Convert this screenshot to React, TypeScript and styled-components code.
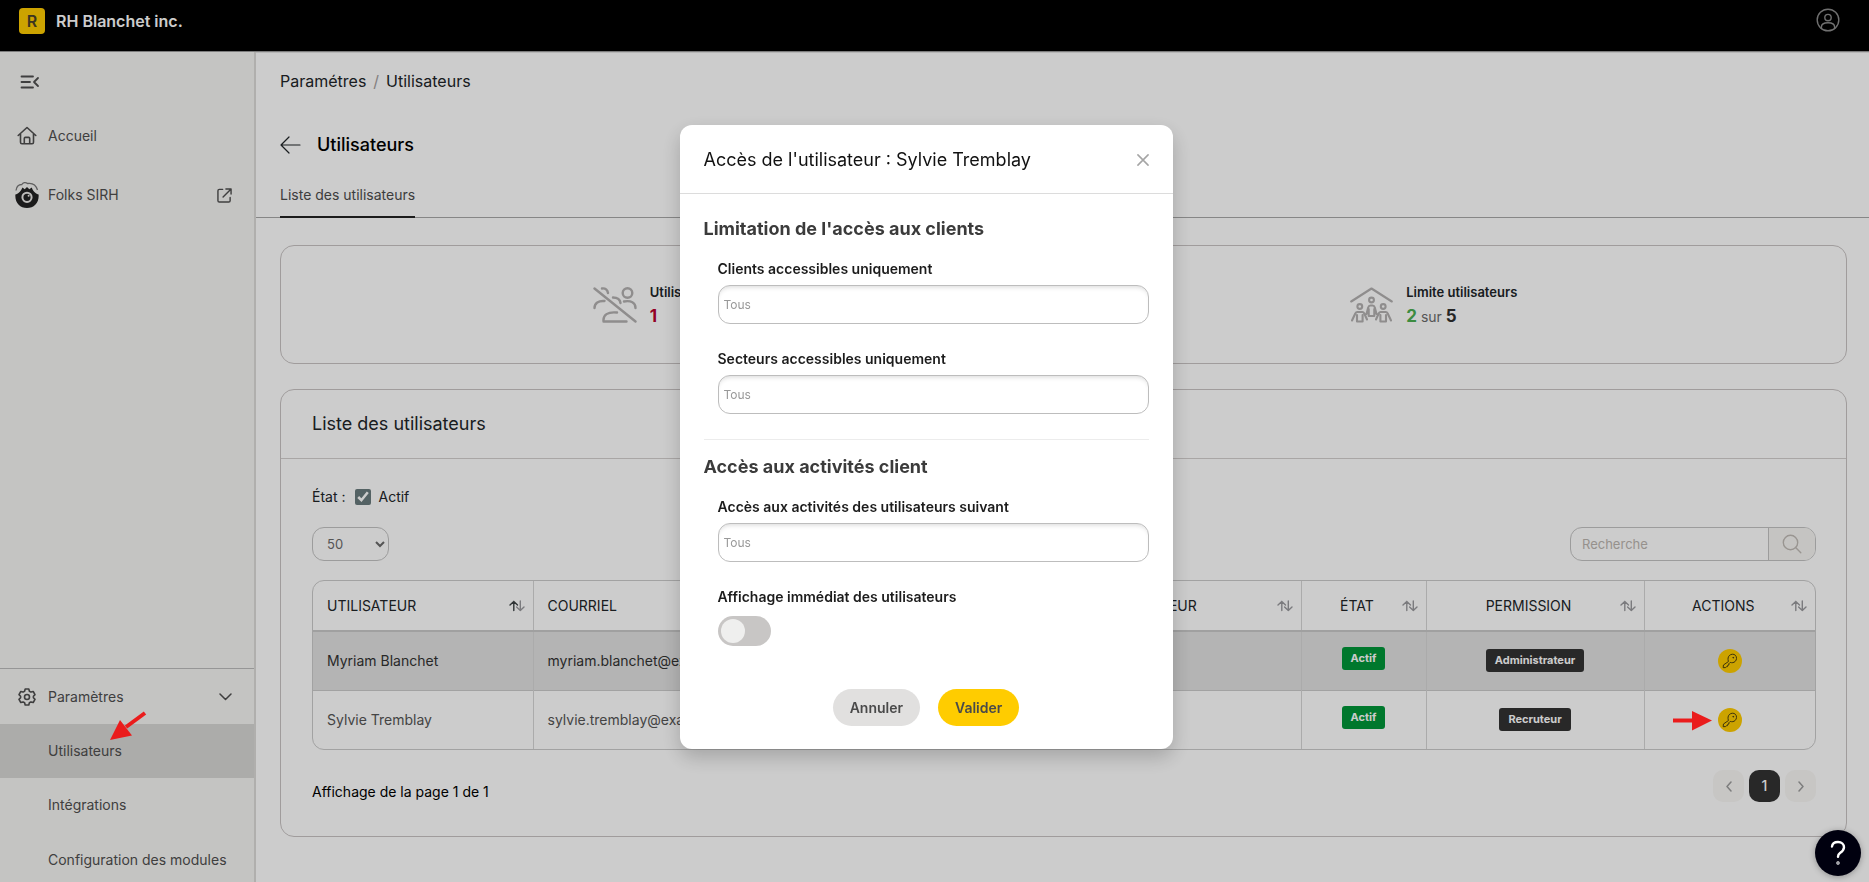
import React from 'react';
import styled, { createGlobalStyle } from 'styled-components';

const GlobalStyle = createGlobalStyle`
  *, *::before, *::after { box-sizing: border-box; }
  body { margin: 0; background: #fff; font-family: Inter, "Liberation Sans", sans-serif; font-size: 14px; line-height: 20px; color: #212529; }
  button, input, select { font: inherit; color: inherit; }
  a { color: inherit; text-decoration: none; }
  h1, h2, h3, p { margin: 0; font-weight: 400; }
`;

const Page = styled.div`
  display: flex;
  flex-direction: column;
  height: 100vh;
  overflow: hidden;
`;

const TopBar = styled.header`
  display: flex;
  flex: none;
  align-items: flex-start;
  justify-content: space-between;
  height: 52px;
  padding: 8px 29px 0 19px;
  background: #000;
  border-bottom: 1px solid #9c9c9c;
`;

const Brand = styled.a`
  display: flex;
  align-items: center;
  gap: 11px;
  color: #fff;
  font-size: 16px;
  font-weight: 600;
  line-height: 26px;
`;

const BrandMark = styled.span`
  width: 26px;
  height: 26px;
  border-radius: 4px;
  background: #ffcc00;
  color: #4a4228;
  text-align: center;
`;

const ProfileButton = styled.button`
  display: flex;
  padding: 0;
  border: 0;
  background: none;
  color: #8c8c8c;
`;

const Body = styled.div`
  display: flex;
  flex: 1;
  min-height: 0;
`;

const Sidebar = styled.nav`
  display: flex;
  flex: none;
  flex-direction: column;
  width: 256px;
  overflow: hidden;
  background: #f6f5f3;
  border-right: 2px solid #dcdbd9;
  color: #4f4f4f;
`;

const CollapseButton = styled.button`
  display: flex;
  align-self: flex-start;
  margin: 23px 20px 19px;
  padding: 0;
  border: 0;
  background: none;
`;

const NavItem = styled.a<{ $tall?: boolean }>`
  display: flex;
  align-items: center;
  height: ${p => (p.$tall ? 64 : 55)}px;
  padding: 0 22px 0 14px;
`;

const NavIcon = styled.span`
  display: flex;
  align-items: center;
  justify-content: center;
  width: 26px;
  margin-right: 8px;
`;

const NavLabel = styled.span`
  flex: 1;
`;

const SettingsGroup = styled.div`
  margin: auto 0 -6px;
  border-top: 1px solid #bcbcbc;
`;

const SubItem = styled.a<{ $active?: boolean }>`
  display: block;
  height: 54px;
  padding-left: 48px;
  line-height: 54px;
  background: ${p => (p.$active ? '#d8d7d5' : 'transparent')};
  &:last-child { height: 56px; line-height: 56px; }
`;

const Main = styled.main`
  flex: 1;
  min-width: 0;
  overflow: hidden;
  border-top: 1px solid #e4e4e4;
`;

const Breadcrumb = styled.div`
  display: flex;
  gap: 7px;
  padding: 17px 24px 0;
  font-size: 16px;
  line-height: 22px;
`;

const Slash = styled.span`
  color: #a59f9f;
`;

const TitleRow = styled.div`
  display: flex;
  align-items: center;
  gap: 16px;
  padding: 41px 24px 0;
`;

const PageTitle = styled.h1`
  color: #000;
  font-size: 18px;
  font-weight: 500;
  line-height: 24px;
`;

const BackLink = styled.a`
  display: flex;
`;

const Tabs = styled.div`
  display: flex;
  padding: 23px 24px 0;
  border-bottom: 1px solid #a8a8a8;
`;

const Tab = styled.a`
  margin-bottom: -1px;
  padding: 5px 0 11px;
  border-bottom: 2px solid #222;
  color: #4d4d4d;
`;

const Content = styled.div`
  display: flex;
  flex-direction: column;
  gap: 25px;
  padding: 27px 22px 0 24px;
`;

const Card = styled.section`
  border: 1px solid #c9c4c4;
  border-radius: 14px;
`;

const Stats = styled(Card)`
  display: grid;
  grid-template-columns: 1fr 1fr;
  height: 119px;
  padding-right: 28px;
`;

const Stat = styled.div`
  display: flex;
  align-items: center;
  justify-content: center;
  gap: 13px;
`;

const StatText = styled.div`
  min-width: 88px;
  padding-top: 4px;
`;

const StatLabel = styled.p`
  font-size: 13px;
  font-weight: 600;
  line-height: 20px;
`;

const StatValue = styled.p`
  color: #6b6b6b;
  font-size: 14px;
  line-height: 28px;
`;

const Figure = styled.strong<{ $color: string }>`
  color: ${p => p.$color};
  font-size: 17px;
  font-weight: 700;
`;

const CardTitle = styled.h2`
  padding: 0 31px;
  border-bottom: 1px solid #d4d0cf;
  font-size: 18px;
  line-height: 68px;
`;

const CardBody = styled.div`
  padding: 28px 30px 34px 31px;
`;

const FilterRow = styled.div`
  display: flex;
  align-items: center;
  gap: 10px;
`;

const CheckLabel = styled.label`
  display: flex;
  align-items: center;
  gap: 7px;
`;

const CheckBox = styled.input`
  width: 16px;
  height: 16px;
  margin: 0;
  accent-color: #6a7b7d;
`;

const ToolRow = styled.div`
  display: flex;
  justify-content: space-between;
  margin: 20px 0 19px;
`;

const PageSize = styled.select`
  width: 77px;
  height: 34px;
  padding: 0 0 0 10px;
  border: 1px solid #c4c4c4;
  border-radius: 12px;
  background: transparent;
  color: #6b6b6b;
  font-size: 13px;
`;

const Search = styled.form`
  display: flex;
  width: 246px;
  height: 34px;
  overflow: hidden;
  border: 1px solid #c4c4c4;
  border-radius: 12px;
`;

const SearchInput = styled.input`
  flex: 1;
  min-width: 0;
  padding: 0 11px;
  border: 0;
  background: transparent;
  font-size: 13px;
  &::placeholder { color: #bcb6b0; }
`;

const SearchButton = styled.button`
  display: flex;
  align-items: center;
  justify-content: center;
  width: 47px;
  padding: 0;
  border: 0;
  border-left: 1px solid #c4c4c4;
  background: #f7f6f3;
  color: #c0bbb6;
`;

const TableFrame = styled.div`
  overflow: hidden;
  border: 1px solid #cbcbcb;
  border-radius: 12px;
`;

const Table = styled.table`
  width: 100%;
  border-collapse: collapse;
  table-layout: fixed;
`;

const Th = styled.th<{ $width?: number }>`
  ${p => p.$width && `width: ${p.$width}px;`}
  height: 50px;
  padding: 0 14px;
  border-bottom: 2px solid #c9c9c9;
  text-align: left;
  font-weight: 400;
  & + & { border-left: 1px solid #d6d6d6; }
`;

const Head = styled.div<{ $center?: boolean }>`
  display: flex;
  align-items: center;
  gap: 3px;
  margin-right: -6px;
  > span { flex: 1; text-align: ${p => (p.$center ? 'center' : 'left')}; }
`;

const Td = styled.td<{ $center?: boolean }>`
  padding: 0 14px;
  text-align: ${p => (p.$center ? 'center' : 'left')};
  & + & { border-left: 1px solid #d6d6d6; }
`;

const Tr = styled.tr<{ $shaded?: boolean }>`
  height: 59px;
  background: ${p => (p.$shaded ? '#e1e1e1' : 'transparent')};
  color: ${p => (p.$shaded ? '#333' : '#555')};
  & + & { border-top: 1px solid #cbcbcb; }
`;

const Badge = styled.span<{ $status?: boolean }>`
  display: inline-block;
  margin-bottom: ${p => (p.$status ? 4 : 0)}px;
  padding: 0 9px;
  border-radius: 3px;
  background: ${p => (p.$status ? '#009639' : '#333')};
  color: #fff;
  font-size: 11px;
  font-weight: 700;
  line-height: 23px;
  vertical-align: middle;
`;

const KeyButton = styled.button`
  display: inline-flex;
  align-items: center;
  justify-content: center;
  width: 24px;
  height: 24px;
  padding: 0;
  border: 0;
  border-radius: 50%;
  background: #ffcc00;
  color: #4a3f10;
  vertical-align: middle;
`;

const TableFooter = styled.div`
  display: flex;
  align-items: flex-end;
  justify-content: space-between;
  margin-top: 20px;
  color: #000;
`;

const Pager = styled.div`
  display: flex;
  gap: 5px;
`;

const PageButton = styled.button<{ $current?: boolean }>`
  display: flex;
  align-items: center;
  justify-content: center;
  width: 31px;
  height: 32px;
  padding: 0;
  border: 0;
  border-radius: 10px;
  background: ${p => (p.$current ? '#333' : '#f9f8f6')};
  color: ${p => (p.$current ? '#fff' : '#9d9d9d')};
  font-weight: 500;
`;

const Backdrop = styled.div`
  position: fixed;
  inset: 0;
  z-index: 1;
  display: flex;
  align-items: flex-start;
  justify-content: center;
  padding: 125px 17px 0 0;
  background: rgba(0, 0, 0, 0.2);
`;

const Modal = styled.div`
  width: 493px;
  border-radius: 12px;
  background: #fff;
  box-shadow: 0 8px 20px rgba(0, 0, 0, 0.2);
`;

const ModalHeader = styled.div`
  display: flex;
  align-items: center;
  justify-content: space-between;
  height: 69px;
  padding: 1px 24px 0;
  border-bottom: 1px solid #dcdcdc;
`;

const ModalTitle = styled.h2`
  color: #111;
  font-size: 18px;
`;

const CloseButton = styled.button`
  display: flex;
  padding: 0;
  border: 0;
  background: none;
  color: #a5a5a5;
`;

const ModalBody = styled.div`
  padding: 22px 24px 23px;
`;

const Section = styled.section`
  & + & {
    margin-top: 25px;
    padding-top: 14px;
    border-top: 1px solid #ececec;
  }
`;

const SectionTitle = styled.h3`
  color: #3b3b3b;
  font-size: 18px;
  font-weight: 700;
  line-height: 26px;
`;

const Field = styled.div<{ $roomy?: boolean }>`
  display: flex;
  flex-direction: column;
  gap: ${p => (p.$roomy ? 9 : 6)}px;
  margin: 17px 0 0 14px;
  & + & { margin-top: 25px; }
`;

const FieldLabel = styled.label`
  color: #1c1c1c;
  font-weight: 600;
`;

const FieldInput = styled.input`
  width: 100%;
  height: 39px;
  padding: 0 5px;
  border: 1px solid #bdbdbd;
  border-radius: 12px;
  background: #fff;
  box-shadow: inset 0 4px 5px -3px rgba(0, 0, 0, 0.16);
  font-size: 12px;
  &::placeholder { color: #999; }
`;

const Toggle = styled.input`
  appearance: none;
  width: 53px;
  height: 30px;
  margin: 0;
  border-radius: 15px;
  background: #c8c6c5;
  &::before {
    content: '';
    display: block;
    width: 24px;
    height: 24px;
    margin: 3px;
    border-radius: 50%;
    background: #efefee;
  }
  &:checked { background: #ffcc00; }
  &:checked::before { margin-left: 26px; }
`;

const Actions = styled.div`
  display: flex;
  justify-content: center;
  gap: 18px;
  margin-top: 43px;
`;

const PillButton = styled.button<{ $primary?: boolean }>`
  height: 37px;
  padding: 0 17px;
  border: 0;
  border-radius: 19px;
  background: ${p => (p.$primary ? '#ffcc00' : '#e1e0df')};
  color: #4a4a4a;
  font-weight: 600;
`;

const HelpButton = styled.button`
  position: fixed;
  right: 8px;
  bottom: 6px;
  z-index: 3;
  display: flex;
  align-items: center;
  justify-content: center;
  width: 46px;
  height: 46px;
  padding: 0;
  border: 0;
  border-radius: 50%;
  background: #00000f;
  color: #fff;
  box-shadow: 0 1px 6px rgba(0, 0, 0, 0.3);
`;

const Pointer = styled.svg<{ $left: number; $top: number }>`
  position: fixed;
  z-index: 2;
  left: ${p => p.$left}px;
  top: ${p => p.$top}px;
`;

const line = { fill: 'none', stroke: 'currentColor', strokeLinecap: 'round', strokeLinejoin: 'round' } as const;

const ProfileIcon = () => (
  <svg width="24" height="24" viewBox="0 0 24 24" {...line} strokeWidth="1.4">
    <circle cx="12" cy="12" r="10.8" />
    <circle cx="12" cy="9.6" r="3.2" />
    <path d="M5.4 20.4V19c0-2.600 2.500-4.200 6.600-4.200s6.600 1.600 6.600 4.200v1.400" />
  </svg>
);

const CollapseIcon = () => (
  <svg width="20" height="14" viewBox="0 0 20 14" {...line} strokeWidth="1.8">
    <path d="M1.500 1.500h11.500M1.500 7h8.500M1.500 12.500h11.500M18 3l-4 4 4 4" />
  </svg>
);

const HomeIcon = () => (
  <svg width="20" height="20" viewBox="0 0 20 20" {...line} strokeWidth="1.6">
    <path d="M1.200 9.500 10 1.500l8.800 8M3.500 8v8.300c0 .8.600 1.400 1.400 1.400h10.200c.8 0 1.400-.6 1.400-1.400V8M7.300 17.400v-5c0-.6.400-1 1-1h3.400c.6 0 1 .4 1 1v5" />
  </svg>
);

const FolksIcon = () => (
  <svg width="24" height="28" viewBox="0 0 24 28">
    <path fill="none" stroke="#777" strokeWidth="1.300" d="M1 9.500C1.500 5.500 4 3.500 6.800 3.500 8 1.500 10.500.8 12.500 2.500 17 1.800 21 4 22.500 9" />
    <path fill="#222" d="M.4 13.500C2.500 13 4.500 11.500 6.200 9L7.500 6.500l2.200 1.700L12 6l2.300 2.200 2.400-1.700L17.800 9c1.700 2.500 3.700 4 5.800 4.500C24.300 21.500 19 27 12 27S-.3 21.500.4 13.500z" />
    <circle cx="12" cy="16.300" r="4.600" fill="#222" stroke="#eceae8" strokeWidth="2" />
    <circle cx="13.600" cy="14.800" r="1" fill="#eceae8" />
  </svg>
);

const ExternalIcon = () => (
  <svg width="15" height="15" viewBox="0 0 16 16" {...line} strokeWidth="1.500">
    <path d="M6 1.500H2.500C1.700 1.500 1 2.200 1 3v10.500c0 .8.700 1.500 1.500 1.500h10c.8 0 1.500-.7 1.500-1.500V10M9.500 1H15v5.500M15 1 6.500 9.500" />
  </svg>
);

const GearIcon = () => (
  <svg width="18" height="18" viewBox="0 0 18 18" {...line} strokeWidth="1.600">
    <path d="M7.200 1h3.600l.6 2.200 1.600.9 2.200-.6L17 6.600 15.400 8.200v1.600L17 11.400l-1.800 3.100-2.200-.6-1.600.9-.6 2.200H7.200l-.6-2.200-1.600-.9-2.200.6L1 11.400 2.600 9.800V8.200L1 6.600l1.800-3.100 2.200.6 1.600-.9z" />
    <circle cx="9" cy="9" r="2.500" />
  </svg>
);

const Chevron = ({ d, w, h }: { d: string; w: number; h: number }) => (
  <svg width={w} height={h} viewBox={`0 0 ${w} ${h}`} {...line} strokeWidth="1.500">
    <path d={d} />
  </svg>
);

const BackIcon = () => (
  <svg width="21" height="18" viewBox="0 0 21 18" {...line} strokeWidth="1.200">
    <path d="M20 9H1M9 1 1 9l8 8" />
  </svg>
);

const NoUsersIcon = () => (
  <svg width="44" height="36" viewBox="0 0 44 36" {...line} strokeWidth="2.400" color="#b3b1b1">
    <path d="M1.500 1.500 42.500 34.500M9 1.500c3.500-.6 5.500 1.500 6 4.500M20 10.500c4 0 7 2 7.500 5.500M1.500 21c0-5 4-7.500 10-7M31 14.500c7-1.200 11.500 1 11.500 6.500M10.500 34c-.5-6 4-9.500 13.500-8.500M10.500 34.500h23" />
    <circle cx="34.500" cy="6" r="4.800" />
  </svg>
);

const HouseUsersIcon = () => (
  <svg width="43" height="36" viewBox="0 0 43 36" {...line} strokeWidth="2.100" color="#b3b1b1">
    <path d="M1.200 14.500 21.500 1.500 41.800 14.500" />
    <circle cx="21.500" cy="13" r="2.400" />
    <circle cx="9.800" cy="19.500" r="2.400" />
    <circle cx="33.200" cy="19.500" r="2.400" />
    <path d="M16.500 27l1.700-6.500c.4-1.300 1-2 2.200-2h2.200c1.200 0 1.800.7 2.200 2L26.500 27M18.700 22v7h5.600v-7M2 33.500l3.300-7c.5-1 1-1.500 2-1.500h5c1 0 1.500.5 2 1.500l2.700 6M7 28v6.500h5.600V28M26 32.500l2.700-6c.5-1 1-1.500 2-1.500h5c1 0 1.500.5 2 1.500l3.300 7M30.400 28v6.500H36V28" />
  </svg>
);

const SearchIcon = () => (
  <svg width="20" height="20" viewBox="0 0 20 20" {...line} strokeWidth="1.400">
    <circle cx="8.500" cy="8.500" r="7.200" />
    <path d="m13.600 13.600 5.200 5.200" />
  </svg>
);

const KeyIcon = () => (
  <svg width="16" height="16" viewBox="0 0 16 16" {...line} strokeWidth="1">
    <path d="M6.300 8.200C5.700 5.700 6 4 7.200 2.700c1.700-1.800 4.500-2 6.200-.4 1.600 1.700 1.500 4.500-.3 6.200-1.300 1.200-3 1.500-4.900.9L6.800 10.800l.1 1.200-1.200.3-.2 1.300-1.200.2-.8.800-2.300.1.200-2.300z" />
    <circle cx="11.200" cy="4.700" r=".4" />
  </svg>
);

const SortIcon = ({ ascending }: { ascending?: boolean }) => (
  <svg width="16" height="12" viewBox="0 0 16 12" {...line} strokeWidth="1.400">
    <path stroke={ascending ? '#3c4244' : '#9a9a9e'} d="M4.800 10.500V1.500M1 5l3.800-3.500L8.500 5" />
    <path stroke="#9a9a9e" d="M11.300 1v9.500M7.600 7l3.700 3.500L15 7" />
  </svg>
);

const CloseIcon = () => (
  <svg width="12" height="12" viewBox="0 0 13 13" {...line} strokeWidth="1.700">
    <path d="m1 1 11 11M12 1 1 12" />
  </svg>
);

const HelpIcon = () => (
  <svg width="18" height="26" viewBox="0 0 18 26" {...line} strokeWidth="2.400">
    <path d="M3 6.500C3.300 3.300 5.800 2 9 2c3.800 0 6 2.300 6 5.300s-2.200 4.500-4 5.700c-1.500 1-2 1.700-2 3.700" />
    <circle cx="9" cy="23" r=".5" />
  </svg>
);

type Column = { name: string; width?: number; center?: boolean; ascending?: boolean };

const columns: Column[] = [
  { name: 'UTILISATEUR', width: 220, ascending: true },
  { name: 'COURRIEL' },
  { name: 'SECTEUR', width: 260, center: true },
  { name: 'ÉTAT', width: 125, center: true },
  { name: 'PERMISSION', width: 218, center: true },
  { name: 'ACTIONS', width: 171, center: true },
];

const users = [
  { name: 'Myriam Blanchet', mail: 'myriam.blanchet@example.com', role: 'Administrateur' },
  { name: 'Sylvie Tremblay', mail: 'sylvie.tremblay@example.com', role: 'Recruteur' },
];

const App = () => (
  <Page>
    <GlobalStyle />
    <TopBar>
      <Brand href="#"><BrandMark>R</BrandMark>RH Blanchet inc.</Brand>
      <ProfileButton aria-label="Profil"><ProfileIcon /></ProfileButton>
    </TopBar>
    <Body>
      <Sidebar>
        <CollapseButton aria-label="Réduire le menu"><CollapseIcon /></CollapseButton>
        <NavItem href="#"><NavIcon><HomeIcon /></NavIcon><NavLabel>Accueil</NavLabel></NavItem>
        <NavItem href="#" $tall><NavIcon><FolksIcon /></NavIcon><NavLabel>Folks SIRH</NavLabel><ExternalIcon /></NavItem>
        <SettingsGroup>
          <NavItem href="#"><NavIcon><GearIcon /></NavIcon><NavLabel>Paramètres</NavLabel><Chevron w={13} h={8} d="m1 1 5.500 5.500L12 1" /></NavItem>
          <SubItem href="#" $active>Utilisateurs</SubItem>
          <SubItem href="#">Intégrations</SubItem>
          <SubItem href="#">Configuration des modules</SubItem>
        </SettingsGroup>
      </Sidebar>
      <Main>
        <Breadcrumb><a href="#">Paramétres</a><Slash>/</Slash><a href="#">Utilisateurs</a></Breadcrumb>
        <TitleRow>
          <BackLink href="#" aria-label="Retour"><BackIcon /></BackLink>
          <PageTitle>Utilisateurs</PageTitle>
        </TitleRow>
        <Tabs><Tab href="#">Liste des utilisateurs</Tab></Tabs>
        <Content>
          <Stats>
            <Stat>
              <NoUsersIcon />
              <StatText>
                <StatLabel>Utilisateurs</StatLabel>
                <StatValue><Figure $color="#b8002e">1</Figure></StatValue>
              </StatText>
            </Stat>
            <Stat>
              <HouseUsersIcon />
              <StatText>
                <StatLabel>Limite utilisateurs</StatLabel>
                <StatValue><Figure $color="#4caf50">2</Figure> sur <Figure $color="#2f2f2f">5</Figure></StatValue>
              </StatText>
            </Stat>
          </Stats>
          <Card>
            <CardTitle>Liste des utilisateurs</CardTitle>
            <CardBody>
              <FilterRow>
                <span>État :</span>
                <CheckLabel><CheckBox type="checkbox" defaultChecked />Actif</CheckLabel>
              </FilterRow>
              <ToolRow>
                <PageSize aria-label="Lignes par page" defaultValue="50"><option>50</option><option>100</option></PageSize>
                <Search>
                  <SearchInput placeholder="Recherche" aria-label="Recherche" />
                  <SearchButton type="button" aria-label="Rechercher"><SearchIcon /></SearchButton>
                </Search>
              </ToolRow>
              <TableFrame>
                <Table>
                  <thead>
                    <tr>
                      {columns.map(c => (
                        <Th key={c.name} $width={c.width}>
                          <Head $center={c.center}><span>{c.name}</span><SortIcon ascending={c.ascending} /></Head>
                        </Th>
                      ))}
                    </tr>
                  </thead>
                  <tbody>
                    {users.map((u, i) => (
                      <Tr key={u.name} $shaded={i === 0}>
                        <Td>{u.name}</Td>
                        <Td>{u.mail}</Td>
                        <Td />
                        <Td $center><Badge $status>Actif</Badge></Td>
                        <Td $center><Badge>{u.role}</Badge></Td>
                        <Td $center><KeyButton aria-label={`Accès de ${u.name}`}><KeyIcon /></KeyButton></Td>
                      </Tr>
                    ))}
                  </tbody>
                </Table>
              </TableFrame>
              <TableFooter>
                <span>Affichage de la page 1 de 1</span>
                <Pager>
                  <PageButton aria-label="Page précédente"><Chevron w={6} h={11} d="M5 1 1 5.500 5 10" /></PageButton>
                  <PageButton $current>1</PageButton>
                  <PageButton aria-label="Page suivante"><Chevron w={6} h={11} d="m1 1 4 4.500L1 10" /></PageButton>
                </Pager>
              </TableFooter>
            </CardBody>
          </Card>
        </Content>
      </Main>
    </Body>

    <Backdrop>
      <Modal role="dialog" aria-labelledby="access-title">
        <ModalHeader>
          <ModalTitle id="access-title">Accès de l'utilisateur : Sylvie Tremblay</ModalTitle>
          <CloseButton aria-label="Fermer"><CloseIcon /></CloseButton>
        </ModalHeader>
        <ModalBody>
          <Section>
            <SectionTitle>Limitation de l'accès aux clients</SectionTitle>
            <Field>
              <FieldLabel htmlFor="clients">Clients accessibles uniquement</FieldLabel>
              <FieldInput id="clients" placeholder="Tous" />
            </Field>
            <Field>
              <FieldLabel htmlFor="sectors">Secteurs accessibles uniquement</FieldLabel>
              <FieldInput id="sectors" placeholder="Tous" />
            </Field>
          </Section>
          <Section>
            <SectionTitle>Accès aux activités client</SectionTitle>
            <Field>
              <FieldLabel htmlFor="activities">Accès aux activités des utilisateurs suivant</FieldLabel>
              <FieldInput id="activities" placeholder="Tous" />
            </Field>
            <Field $roomy>
              <FieldLabel htmlFor="immediate">Affichage immédiat des utilisateurs</FieldLabel>
              <Toggle id="immediate" type="checkbox" role="switch" />
            </Field>
          </Section>
          <Actions>
            <PillButton>Annuler</PillButton>
            <PillButton $primary>Valider</PillButton>
          </Actions>
        </ModalBody>
      </Modal>
    </Backdrop>

    <Pointer $left={109} $top={710} width="40" height="32" viewBox="0 0 40 32">
      <path d="M36 3 17 17" stroke="#ea1c1c" strokeWidth="4" />
      <path d="M1 30 11 10 23 25.500z" fill="#ea1c1c" />
    </Pointer>
    <Pointer $left={1673} $top={710} width="40" height="22" viewBox="0 0 40 22">
      <path d="M0 10.500h22" stroke="#ea1c1c" strokeWidth="4" />
      <path d="M39 10.500 19 1v19.500z" fill="#ea1c1c" />
    </Pointer>
    <HelpButton aria-label="Aide"><HelpIcon /></HelpButton>
  </Page>
);

export default App;
